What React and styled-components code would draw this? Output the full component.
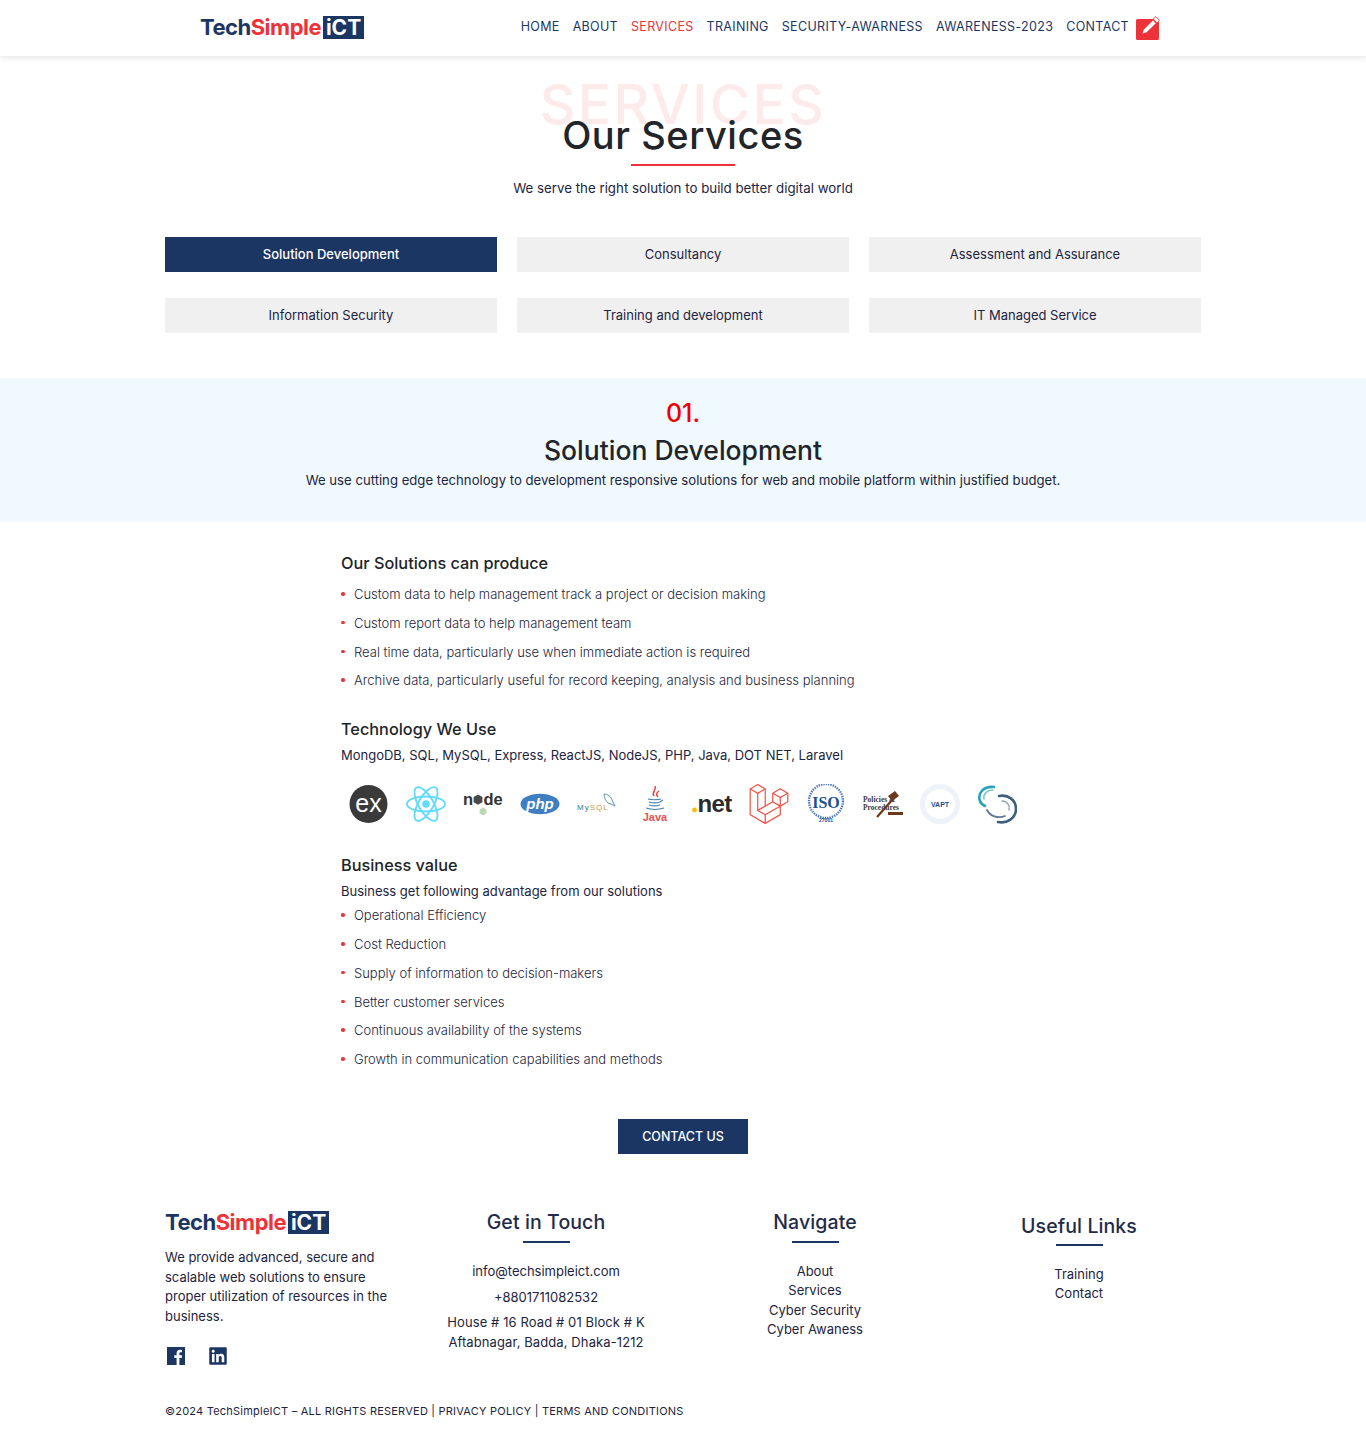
import React from 'react'
import styled, { createGlobalStyle } from 'styled-components'
import { FaLinkedin } from 'react-icons/fa'
import { SiLaravel } from 'react-icons/si'

const NAVY = '#1c3664'
const RED = '#ee3239'

const GlobalStyle = createGlobalStyle`
  * { box-sizing: border-box; }
  body {
    margin: 0;
    background: #fff;
    color: #212529;
    font-family: Inter, "Noto Sans", sans-serif;
    font-size: 13px;
  }
`

const Page = styled.div`
  width: 1366px;
  height: 1446px;
  overflow: hidden;
`

const Header = styled.header`
  height: 56px;
  padding: 0 205px 0 200px;
  display: flex;
  align-items: center;
  justify-content: space-between;
  box-shadow: 0 2px 6px rgba(0, 0, 0, 0.1);
`

const LogoWrap = styled.div`
  display: flex;
  align-items: center;
  width: 164px;
  height: 24px;
  margin-top: ${(props) => (props.$header ? -2 : 0)}px;
  font-size: 22px;
  font-weight: 700;
  letter-spacing: -0.5px;
  line-height: 24px;
  color: ${NAVY};
`

const LogoRed = styled.span`
  color: ${RED};
`

const LogoBox = styled.span`
  margin-left: 2px;
  width: 41px;
  height: 23px;
  background: ${NAVY};
  color: #fff;
  font-size: 21px;
  text-align: center;
  letter-spacing: 0;
  line-height: 23px;
`

const Nav = styled.nav`
  display: flex;
  align-items: center;
  gap: 13px;
`

const NavLink = styled.a`
  margin-top: -4px;
  font-size: 12.5px;
  letter-spacing: 0.32px;
  color: ${(props) => (props.$active ? RED : NAVY)};
`

const NoteSvg = styled.svg`
  margin-left: -6px;
  width: 25px;
  height: 25px;
`

const Intro = styled.section`
  position: relative;
  padding-top: 56px;
  text-align: center;
`

const Ghost = styled.div`
  position: absolute;
  top: 18px;
  left: 0;
  right: 0;
  font-size: 55px;
  line-height: 60px;
  font-weight: 500;
  letter-spacing: 2.5px;
  color: #fdeaeb;
`

const Title = styled.h1`
  position: relative;
  margin: 0;
  font-size: 38px;
  line-height: 46px;
  font-weight: 500;
  letter-spacing: 0.55px;
`

const RedRule = styled.div`
  width: 104px;
  height: 2px;
  margin: 6px auto 0;
  background: ${RED};
`

const Sub = styled.p`
  margin: 12px 0 0;
  font-size: 13.3px;
  line-height: 20px;
  color: #1d2440;
`

const TabGrid = styled.div`
  width: 1036px;
  margin: 39px auto 0;
  display: grid;
  grid-template-columns: repeat(3, 332px);
  gap: 26px 20px;
`

const Tab = styled.button`
  height: 35px;
  border: none;
  padding: 0 0 2px;
  font-family: inherit;
  font-size: 13px;
  font-weight: ${(props) => (props.$active ? 500 : 400)};
  background: ${(props) => (props.$active ? NAVY : '#f0f0f0')};
  color: ${(props) => (props.$active ? '#fff' : '#1d2440')};
`

const Band = styled.section`
  margin-top: 45px;
  height: 144px;
  padding-top: 21px;
  background: #f0f9fe;
  text-align: center;
`

const BandNumber = styled.div`
  font-size: 25px;
  line-height: 28px;
  font-weight: 500;
  color: #f00000;
`

const BandTitle = styled.h2`
  margin: 6px 0 0;
  font-size: 26.5px;
  line-height: 34px;
  font-weight: 500;
`

const BandText = styled.p`
  margin: 3px 0 0;
  font-size: 13.15px;
  line-height: 20px;
  color: #1d2440;
`

const Content = styled.section`
  padding: 29px 0 0 341px;
`

const BlockTitle = styled.h3`
  margin: ${(props) => props.$top || 0}px 0 0;
  font-size: 16.3px;
  line-height: 24px;
  font-weight: 500;
`

const Lead = styled.p`
  margin: 4px 0 0;
  font-size: 13px;
  line-height: 20px;
  color: #1d2440;
`

const List = styled.ul`
  margin: ${(props) => props.$top}px 0 0;
  padding: 0;
  list-style: none;
`

const Item = styled.li`
  position: relative;
  height: 20px;
  margin-bottom: 8.78px;
  padding-left: 13px;
  font-size: 13px;
  font-weight: 300;
  line-height: 20px;
  color: #1d2440;

  &::before {
    content: '';
    position: absolute;
    left: 0;
    top: 8px;
    width: 3.5px;
    height: 3.5px;
    border-radius: 50%;
    background: ${RED};
  }

  &:last-child {
    margin-bottom: 0;
  }
`

const TechRow = styled.div`
  display: flex;
  margin: 19px 0 0 -0.5px;
  height: 40px;
`

const TechCell = styled.div`
  width: 57.1px;
  height: 40px;
  display: flex;
  justify-content: center;
  align-items: center;
`

const TechSvg = styled.svg`
  width: 40px;
  height: 40px;
  font-family: "Liberation Sans", sans-serif;
`

const CtaWrap = styled.div`
  margin-top: 50px;
  text-align: center;
`

const Cta = styled.button`
  width: 130px;
  height: 35px;
  border: none;
  padding: 0;
  background: ${NAVY};
  color: #fff;
  font-family: inherit;
  font-size: 12.5px;
  font-weight: 500;
`

const Footer = styled.footer`
  width: 1060px;
  margin: 56px 0 0 165px;
  display: grid;
  grid-template-columns: 235px 292px 246px 282px;
  align-items: start;
`

const FooterText = styled.p`
  width: 230px;
  margin: 14px 0 0;
  font-size: 13px;
  line-height: 19.5px;
  color: #1d2440;
`

const Socials = styled.div`
  display: flex;
  align-items: center;
  gap: 23px;
  margin: 20px 0 0 2px;
  color: ${NAVY};
  font-size: 20px;
  line-height: 0;
`

const FooterCol = styled.div`
  padding-top: ${(props) => props.$top || 0}px;
  text-align: center;
`

const FooterTitle = styled.h4`
  margin: 0;
  font-size: 19.5px;
  line-height: 24px;
  font-weight: 500;
  letter-spacing: 0.1px;
  color: #1f2b48;
`

const NavyRule = styled.div`
  width: 47px;
  height: 2px;
  margin: ${(props) => props.$top || 7}px auto 0;
  background: ${NAVY};
`

const FooterLines = styled.div`
  margin-top: ${(props) => props.$top}px;
  font-size: 13px;
  line-height: ${(props) => props.$line}px;
  letter-spacing: ${(props) => props.$spacing || 0}px;
  color: #1d2440;
`

const Copyright = styled.div`
  margin: 37px 0 0 165px;
  font-size: 11px;
  line-height: 16px;
  letter-spacing: 0.22px;
  color: #1d2440;
`

const Logo = ({ header }) => (
  <LogoWrap $header={header}>
    Tech<LogoRed>Simple</LogoRed>
    <LogoBox>iCT</LogoBox>
  </LogoWrap>
)

const NoteIcon = () => (
  <NoteSvg viewBox="0 0 25 25">
    <rect x="0" y="3" width="23" height="21" rx="1.5" fill={RED} />
    <path d="M6.5 17.5l1.4-4L17 4.5l2.8 2.8-9.2 9L6.5 17.5z" fill="#fff" />
    <path d="M18.4 1.6l1.4-1 3.6 3.6-1 1.6-1.2 1.2-3.9-3.9z" fill="#fff" stroke={RED} strokeWidth="0.8" />
  </NoteSvg>
)

const FacebookIcon = () => (
  <svg width="18" height="18" viewBox="0 0 18 18">
    <rect width="18" height="18" fill={NAVY} />
    <path d="M12.4 18v-7h2.3l.4-2.7h-2.7V6.6c0-.8.2-1.3 1.3-1.3H15V2.9c-.3 0-1.1-.1-2-.1-2 0-3.4 1.2-3.4 3.5v2H7.3V11h2.3v7z" fill="#fff" />
  </svg>
)

const techIcons = [
  <TechSvg viewBox="0 0 40 40" key="express">
    <circle cx="19.5" cy="20" r="19" fill="#3a3a3a" />
    <text x="19.5" y="28" fontSize="25" textAnchor="middle" fill="#fff">ex</text>
  </TechSvg>,
  <TechSvg viewBox="0 0 40 40" key="react">
    <g fill="none" stroke="#61dafb" strokeWidth="1.8">
      <ellipse cx="20" cy="20" rx="19" ry="7.5" />
      <ellipse cx="20" cy="20" rx="19" ry="7.5" transform="rotate(60 20 20)" />
      <ellipse cx="20" cy="20" rx="19" ry="7.5" transform="rotate(120 20 20)" />
    </g>
    <circle cx="20" cy="20" r="3.8" fill="#61dafb" />
  </TechSvg>,
  <TechSvg viewBox="0 0 40 40" key="node">
    <text x="0" y="21" fontSize="16.5" fontWeight="700" fill="#333">n</text>
    <path d="M15 10.5l4.4 2.5v5.2L15 20.8l-4.4-2.6V13z" fill="#4a4a4a" />
    <text x="20.5" y="21" fontSize="16.5" fontWeight="700" fill="#333">de</text>
    <path d="M20 23.5l3.4 2v4l-3.4 2-3.4-2v-4z" fill="#bcd9b4" />
  </TechSvg>,
  <TechSvg viewBox="0 0 40 40" key="php">
    <ellipse cx="20" cy="20" rx="19.5" ry="10.3" fill="#3f7fc1" />
    <text x="20" y="25" fontSize="15" fontWeight="700" fontStyle="italic" textAnchor="middle" fill="#fff">php</text>
  </TechSvg>,
  <TechSvg viewBox="0 0 40 40" key="mysql">
    <path d="M27 10c4 0 7 3 8 6l3 6-4-2-3-1c-2-2-4-5-4-9z" fill="none" stroke="#4f8aa6" strokeWidth="0.9" />
    <text x="0" y="26" fontSize="8" fill="#2f7ca3" letterSpacing="1">My<tspan fill="#c79a4a">SQL</tspan></text>
  </TechSvg>,
  <TechSvg viewBox="0 0 40 40" key="java">
    <path d="M20 2c2 4-4 6-1 10M24 7c-3 2-3 4-1 6" fill="none" stroke="#e2413c" strokeWidth="1.5" />
    <g fill="none" stroke="#3e7fb8" strokeWidth="1.1">
      <path d="M13 15c3 1 10 1 13 0" />
      <path d="M14 18c3 1 8 1 11 0l3-2" />
      <path d="M14 21c3 1 8 1 11 0" />
      <path d="M11 24c5 1.6 13 1.6 18 0" />
    </g>
    <text x="20" y="37" fontSize="11" fontWeight="700" textAnchor="middle" fill="#e8534f">Java</text>
  </TechSvg>,
  <TechSvg viewBox="0 0 40 40" key="net">
    <circle cx="2.5" cy="26" r="2.4" fill="#f7bb0e" />
    <text x="22.5" y="28" fontSize="24" fontWeight="700" textAnchor="middle" fill="#2b2b2b" letterSpacing="-0.6">net</text>
  </TechSvg>,
  <SiLaravel size={40} color="#f2564a" key="laravel" />,
  <TechSvg viewBox="0 0 40 40" key="iso">
    <circle cx="20" cy="17" r="17" fill="none" stroke="#4d79b3" strokeWidth="2.4" strokeDasharray="1.4 1" />
    <text x="20" y="24" fontSize="16" fontWeight="700" textAnchor="middle" fill="#1c4f93" stroke="#fff" strokeWidth="2.4" paintOrder="stroke" fontFamily="Liberation Serif">ISO</text>
    <text x="20" y="38" fontSize="5" fontWeight="700" textAnchor="middle" fill="#1c4f93">27001</text>
  </TechSvg>,
  <TechSvg viewBox="0 0 40 40" key="policies">
    <text x="0" y="18" fontSize="7.5" fontWeight="700" fill="#3b3b3b" fontFamily="Liberation Serif">Policies &amp;</text>
    <text x="0" y="26" fontSize="7.5" fontWeight="700" fill="#3b3b3b" fontFamily="Liberation Serif">Procedures</text>
    <path d="M25 12l7-5 4 5-7 5z" fill="#6b3a1d" />
    <path d="M30 15L14 33" stroke="#6b3a1d" strokeWidth="2.2" />
    <path d="M25 28h15v3H25z" fill="#6b3a1d" />
  </TechSvg>,
  <TechSvg viewBox="0 0 40 40" key="vapt">
    <circle cx="20" cy="20" r="17.5" fill="#fff" stroke="#edf3f9" strokeWidth="5" />
    <text x="20" y="22.5" fontSize="7" fontWeight="700" textAnchor="middle" fill="#1c4f86">VAPT</text>
  </TechSvg>,
  <TechSvg viewBox="0 0 40 40" key="swirl">
    <g fill="none" strokeLinecap="round">
      <path d="M17 3C7 2 0 9 3 17c1 3 3 4 5 5" stroke="#2aa3b5" strokeWidth="2.6" />
      <path d="M16 6c-6 0-10 4-9 9" stroke="#7cc7d3" strokeWidth="1.6" />
      <path d="M22 12c9-2 17 4 17 13 0 9-9 15-18 13" stroke="#3d5f7d" strokeWidth="2.6" />
      <path d="M10 26c3 6 11 9 18 6" stroke="#5e7a93" strokeWidth="1.8" />
      <path d="M25 17c5 0 8 4 7 9" stroke="#8ba2b6" strokeWidth="1.4" />
    </g>
  </TechSvg>,
]

const solutions = [
  'Custom data to help management track a project or decision making',
  'Custom report data to help management team',
  'Real time data, particularly use when immediate action is required',
  'Archive data, particularly useful for record keeping, analysis and business planning',
]

const values = [
  'Operational Efficiency',
  'Cost Reduction',
  'Supply of information to decision-makers',
  'Better customer services',
  'Continuous availability of the systems',
  'Growth in communication capabilities and methods',
]

const navItems = ['HOME', 'ABOUT', 'SERVICES', 'TRAINING', 'SECURITY-AWARNESS', 'AWARENESS-2023', 'CONTACT']

const tabs = [
  'Solution Development',
  'Consultancy',
  'Assessment and Assurance',
  'Information Security',
  'Training and development',
  'IT Managed Service',
]

export default function App() {
  return (
    <Page>
      <GlobalStyle />
      <Header>
        <Logo header />
        <Nav>
          {navItems.map((item) => (
            <NavLink key={item} $active={item === 'SERVICES'}>{item}</NavLink>
          ))}
          <NoteIcon />
        </Nav>
      </Header>

      <Intro>
        <Ghost>SERVICES</Ghost>
        <Title>Our Services</Title>
        <RedRule />
        <Sub>We serve the right solution to build better digital world</Sub>
      </Intro>

      <TabGrid>
        {tabs.map((tab, i) => (
          <Tab key={tab} $active={i === 0}>{tab}</Tab>
        ))}
      </TabGrid>

      <Band>
        <BandNumber>01.</BandNumber>
        <BandTitle>Solution Development</BandTitle>
        <BandText>We use cutting edge technology to development responsive solutions for web and mobile platform within justified budget.</BandText>
      </Band>

      <Content>
        <BlockTitle>Our Solutions can produce</BlockTitle>
        <List $top={9}>
          {solutions.map((text) => <Item key={text}>{text}</Item>)}
        </List>

        <BlockTitle $top={27}>Technology We Use</BlockTitle>
        <Lead>MongoDB, SQL, MySQL, Express, ReactJS, NodeJS, PHP, Java, DOT NET, Laravel</Lead>
        <TechRow>
          {techIcons.map((icon) => (
            <TechCell key={icon.key}>{icon}</TechCell>
          ))}
        </TechRow>

        <BlockTitle $top={29}>Business value</BlockTitle>
        <Lead>Business get following advantage from our solutions</Lead>
        <List $top={4}>
          {values.map((text) => <Item key={text}>{text}</Item>)}
        </List>
      </Content>

      <CtaWrap>
        <Cta>CONTACT US</Cta>
      </CtaWrap>

      <Footer>
        <div>
          <Logo />
          <FooterText>We provide advanced, secure and scalable web solutions to ensure proper utilization of resources in the business.</FooterText>
          <Socials>
            <FacebookIcon />
            <FaLinkedin />
          </Socials>
        </div>
        <FooterCol>
          <FooterTitle>Get in Touch</FooterTitle>
          <NavyRule />
          <FooterLines $top={15} $line={26}>
            info@techsimpleict.com<br />+8801711082532
          </FooterLines>
          <FooterLines $top={3} $line={19.5} $spacing={0.1}>
            House # 16 Road # 01 Block # K<br />Aftabnagar, Badda, Dhaka-1212
          </FooterLines>
        </FooterCol>
        <FooterCol>
          <FooterTitle>Navigate</FooterTitle>
          <NavyRule />
          <FooterLines $top={19} $line={19.3}>
            About<br />Services<br />Cyber Security<br />Cyber Awaness
          </FooterLines>
        </FooterCol>
        <FooterCol $top={4}>
          <FooterTitle>Useful Links</FooterTitle>
          <NavyRule $top={6} />
          <FooterLines $top={19} $line={19.3}>
            Training<br />Contact
          </FooterLines>
        </FooterCol>
      </Footer>

      <Copyright>©2024 TechSimpleICT – ALL RIGHTS RESERVED | PRIVACY POLICY | TERMS AND CONDITIONS</Copyright>
    </Page>
  )
}
